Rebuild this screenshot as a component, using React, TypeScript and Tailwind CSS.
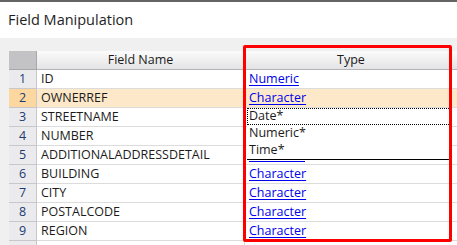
import type { JSX } from 'react'

interface FieldRow {
  name: string
  type: string
}

const rows: FieldRow[] = [
  { name: 'ID', type: 'Numeric' },
  { name: 'OWNERREF', type: 'Character' },
  { name: 'STREETNAME', type: '' },
  { name: 'NUMBER', type: '' },
  { name: 'ADDITIONALADDRESSDETAIL', type: '' },
  { name: 'BUILDING', type: 'Character' },
  { name: 'CITY', type: 'Character' },
  { name: 'POSTALCODE', type: 'Character' },
  { name: 'REGION', type: 'Character' },
  { name: '', type: '' }
]

const typeOptions = ['Date*', 'Numeric*', 'Time*']

export default function App(): JSX.Element {
  const selected = 1

  return (
    <div
      className="relative w-[457px] h-[245px] overflow-hidden bg-[#f0f0f0] text-[#1b1b1b]"
      style={{ fontFamily: '"Open Sans", "Noto Sans", sans-serif' }}
    >
      <div className="h-[2px] bg-[#646464]" />
      <div className="h-[36px] bg-white flex items-center pl-[8px] text-[14.5px] text-[#1e1e1e]">
        Field Manipulation
      </div>

      <div className="relative pt-[13px] pl-[9px]">
        <div className="grid grid-cols-[28px_208px_212px] text-[12.5px] leading-none">
          <div className="h-[19px] bg-[#c3c3c6] border-r border-b border-[#a8a8ac]" />
          <div className="h-[19px] flex items-center justify-center bg-gradient-to-b from-[#fbfbfb] to-[#e4e4e6] border-r border-b border-[#b4b4b8]">
            Field Name
          </div>
          <div className="h-[19px] flex items-center justify-center bg-gradient-to-b from-[#fbfbfb] to-[#e4e4e6] border-b border-[#b4b4b8]">
            Type
          </div>

          {rows.map((row, i) => {
            const isSel = i === selected
            return (
              <div key={i} className="contents">
                <div
                  className={`h-[19px] flex items-center justify-center border-r border-b border-[#c8c8cc] text-[#203a70] ${
                    isSel ? 'bg-[#fdd7a0]' : 'bg-[#ebebee]'
                  }`}
                >
                  {row.name ? i + 1 : ''}
                </div>
                <div
                  className={`h-[19px] flex items-center pl-[4px] border-r border-b border-[#dcdcdc] ${
                    isSel ? 'bg-[#fde9c9]' : 'bg-white'
                  }`}
                >
                  {row.name}
                </div>
                <div
                  className={`relative h-[19px] flex items-center pl-[4px] border-b border-[#dcdcdc] ${
                    isSel ? 'bg-[#fde9c9]' : 'bg-white'
                  }`}
                >
                  {row.type && (
                    <span className="text-[#0000ee] underline underline-offset-2">{row.type}</span>
                  )}
                  {i === 4 && (
                    <div className="absolute left-[4px] bottom-[2px] w-[56px] h-px bg-[#0000ee]" />
                  )}
                </div>
              </div>
            )
          })}
        </div>

        {/* open type dropdown */}
        <div className="absolute left-[247px] top-[70px] w-[204px] bg-white border-b border-black text-[12.5px] leading-none">
          {typeOptions.map((opt, i) => (
            <div
              key={opt}
              className={`h-[17px] flex items-center pl-[1px] ${
                i === 0 ? 'border border-dotted border-black' : 'border border-transparent'
              }`}
            >
              {opt}
            </div>
          ))}
        </div>
      </div>

      {/* annotation box */}
      <div className="absolute left-[243px] top-[45px] w-[209px] h-[197px] border-[3px] border-[#ff0000] rounded-[2px]" />
    </div>
  )
}
